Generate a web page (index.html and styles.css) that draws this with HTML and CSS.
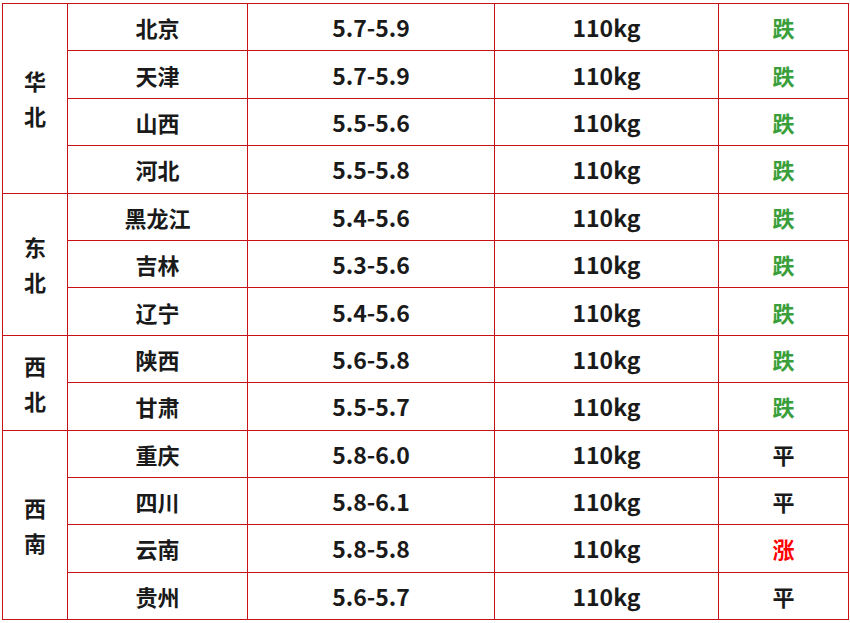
FILE: index.html
```html
<!DOCTYPE html>
<html lang="zh-CN">
<head>
<meta charset="utf-8">
<link rel="stylesheet" href="styles.css">
</head>
<body>
<table class="price">
<colgroup><col class="c1"><col class="c2"><col class="c3"><col class="c4"><col class="c5"></colgroup>
<tbody>
<tr><td rowspan="4" class="region">华<br>北</td><td>北京</td><td class="num">5.7-5.9</td><td class="num">110kg</td><td class="down">跌</td></tr>
<tr><td>天津</td><td class="num">5.7-5.9</td><td class="num">110kg</td><td class="down">跌</td></tr>
<tr><td>山西</td><td class="num">5.5-5.6</td><td class="num">110kg</td><td class="down">跌</td></tr>
<tr><td>河北</td><td class="num">5.5-5.8</td><td class="num">110kg</td><td class="down">跌</td></tr>
<tr><td rowspan="3" class="region">东<br>北</td><td>黑龙江</td><td class="num">5.4-5.6</td><td class="num">110kg</td><td class="down">跌</td></tr>
<tr><td>吉林</td><td class="num">5.3-5.6</td><td class="num">110kg</td><td class="down">跌</td></tr>
<tr><td>辽宁</td><td class="num">5.4-5.6</td><td class="num">110kg</td><td class="down">跌</td></tr>
<tr><td rowspan="2" class="region">西<br>北</td><td>陕西</td><td class="num">5.6-5.8</td><td class="num">110kg</td><td class="down">跌</td></tr>
<tr><td>甘肃</td><td class="num">5.5-5.7</td><td class="num">110kg</td><td class="down">跌</td></tr>
<tr><td rowspan="4" class="region">西<br>南</td><td>重庆</td><td class="num">5.8-6.0</td><td class="num">110kg</td><td>平</td></tr>
<tr><td>四川</td><td class="num">5.8-6.1</td><td class="num">110kg</td><td>平</td></tr>
<tr><td>云南</td><td class="num">5.8-5.8</td><td class="num">110kg</td><td class="up">涨</td></tr>
<tr><td>贵州</td><td class="num">5.6-5.7</td><td class="num">110kg</td><td>平</td></tr>
</tbody>
</table>
</body>
</html>
```

FILE: styles.css
```css
html, body {
  margin: 0;
  padding: 0;
  background: #ffffff;
}
body {
  padding: 3px 0 0 2px;
  font-family: "Noto Sans CJK SC", "Noto Sans", sans-serif;
  font-weight: 700;
  font-size: 22px;
  color: #1a1a1a;
}
.price {
  border-collapse: collapse;
  table-layout: fixed;
  width: 846px;
}
.c1 { width: 65px; }
.c2 { width: 180px; }
.c3 { width: 247px; }
.c4 { width: 224px; }
.c5 { width: 130px; }
.price td {
  border: 1px solid #c8121a;
  text-align: center;
  vertical-align: middle;
  height: 46.4px;
  padding: 0;
  line-height: 24px;
}
.price td.num {
  font-size: 23px;
}
.price td.region {
  line-height: 35px;
}
.down { color: #3a9f3a; }
.up { color: #ff0000; }
```
